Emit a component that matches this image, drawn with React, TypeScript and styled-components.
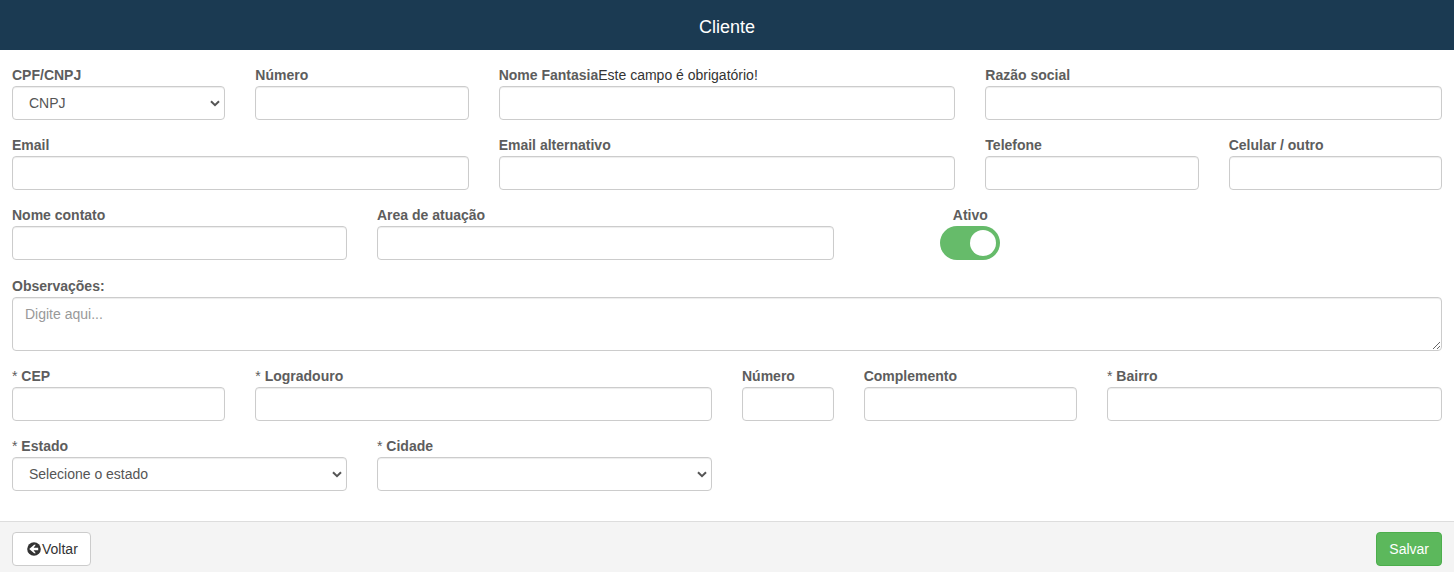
import React from "react";
import styled, { createGlobalStyle, css } from "styled-components";

const GlobalStyle = createGlobalStyle`
  *, *::before, *::after { box-sizing: border-box; }
  body {
    margin: 0;
    background: #fff;
    color: #333;
    font: 14px/20px "Liberation Sans", Arial, Helvetica, sans-serif;
  }
  input, select, textarea, button { font: inherit; margin: 0; }
`;

const Page = styled.div`
  display: flex;
  flex-direction: column;
  height: 572px;
  overflow: hidden;
`;

const Header = styled.header`
  flex: none;
  height: 50px;
  padding-top: 4px;
  display: flex;
  align-items: center;
  justify-content: center;
  background: #1b3a52;
  color: #fff;
  font-size: 18px;
`;

const Form = styled.main`
  flex: 1;
  padding: 16px 12px 0;
`;

const Row = styled.div<{ $space?: number }>`
  display: grid;
  grid-template-columns: repeat(12, minmax(0, 1fr));
  column-gap: 30px;
  margin-bottom: ${(p) => p.$space ?? 16}px;
`;

const Cell = styled.div<{ $span: number }>`
  grid-column: span ${(p) => p.$span};
  display: flex;
  flex-direction: column;
`;

const LabelLine = styled.div`
  height: 20px;
  line-height: 19px;
  white-space: nowrap;
`;

const Label = styled.label`
  font-weight: bold;
  color: #5d5d5d;
`;

const Star = styled.span`
  font-weight: normal;
`;

const control = css`
  display: block;
  width: 100%;
  height: 34px;
  padding: 6px 12px;
  color: #555;
  background: #fff;
  border: 1px solid #ccc;
  border-radius: 4px;
  box-shadow: inset 0 1px 1px rgba(0, 0, 0, 0.075);
  outline: none;
`;

const Input = styled.input`
  ${control}
`;

const SelectBox = styled.div`
  position: relative;
`;

const Select = styled.select`
  ${control}
  appearance: none;
  padding-left: 16px;
`;

const Chevron = styled.svg`
  position: absolute;
  top: 14px;
  right: 5px;
  width: 10px;
  height: 7px;
  pointer-events: none;
`;

const TextArea = styled.textarea`
  ${control}
  height: 54px;
  resize: vertical;
  &::placeholder { color: #999; }
`;

const ToggleCell = styled(Cell)`
  align-items: center;
`;

const Toggle = styled.button`
  width: 60px;
  height: 34px;
  padding: 4px;
  border: 0;
  border-radius: 34px;
  background: #66bb6a;
  display: flex;
  align-items: center;
  justify-content: flex-end;
`;

const Knob = styled.span`
  width: 26px;
  height: 26px;
  border-radius: 50%;
  background: #fff;
`;

const Footer = styled.footer`
  flex: none;
  height: 51px;
  padding: 10px 12px 0;
  display: flex;
  justify-content: space-between;
  align-items: flex-start;
  background: #f4f4f4;
  border-top: 1px solid #ddd;
`;

const Button = styled.button<{ $primary?: boolean }>`
  height: 34px;
  padding: 6px 12px;
  display: inline-flex;
  align-items: center;
  border-radius: 4px;
  border: 1px solid ${(p) => (p.$primary ? "#4cae4c" : "#ccc")};
  background: ${(p) => (p.$primary ? "#5cb85c" : "#fff")};
  color: ${(p) => (p.$primary ? "#fff" : "#333")};
`;

const BackIcon = styled.svg`
  width: 14px;
  height: 14px;
  margin: 0 1px 0 2px;
`;

function Caption({ text, required, error }: { text: string; required?: boolean; error?: string }) {
  return (
    <LabelLine>
      <Label>{required && <Star>* </Star>}{text}</Label>
      {error}
    </LabelLine>
  );
}

interface FieldProps {
  span: number;
  label: string;
  required?: boolean;
  error?: string;
  options?: string[];
}

function Field({ span, label, required, error, options }: FieldProps) {
  return (
    <Cell $span={span}>
      <Caption text={label} required={required} error={error} />
      {options ? (
        <SelectBox>
          <Select aria-label={label}>
            {options.map((o) => <option key={o}>{o}</option>)}
          </Select>
          <Chevron viewBox="0 0 10 7" aria-hidden="true">
            <path d="M1 1.2 5 5.2 9 1.2" fill="none" stroke="#555" strokeWidth="2" />
          </Chevron>
        </SelectBox>
      ) : (
        <Input aria-label={label} />
      )}
    </Cell>
  );
}

export default function App() {
  return (
    <Page>
      <GlobalStyle />
      <Header>Cliente</Header>
      <Form>
        <Row>
          <Field span={2} label="CPF/CNPJ" options={["CNPJ"]} />
          <Field span={2} label="Número" />
          <Field span={4} label="Nome Fantasia" error="Este campo é obrigatório!" />
          <Field span={4} label="Razão social" />
        </Row>
        <Row>
          <Field span={4} label="Email" />
          <Field span={4} label="Email alternativo" />
          <Field span={2} label="Telefone" />
          <Field span={2} label="Celular / outro" />
        </Row>
        <Row $space={17}>
          <Field span={3} label="Nome contato" />
          <Field span={4} label="Area de atuação" />
          <ToggleCell $span={2}>
            <Caption text="Ativo" />
            <Toggle role="switch" aria-checked="true" aria-label="Ativo"><Knob /></Toggle>
          </ToggleCell>
        </Row>
        <Row>
          <Cell $span={12}>
            <Caption text="Observações:" />
            <TextArea placeholder="Digite aqui..." />
          </Cell>
        </Row>
        <Row>
          <Field span={2} label="CEP" required />
          <Field span={4} label="Logradouro" required />
          <Field span={1} label="Número" />
          <Field span={2} label="Complemento" />
          <Field span={3} label="Bairro" required />
        </Row>
        <Row>
          <Field span={3} label="Estado" required options={["Selecione o estado"]} />
          <Field span={3} label="Cidade" required options={[""]} />
        </Row>
      </Form>
      <Footer>
        <Button>
          <BackIcon viewBox="0 0 14 14" aria-hidden="true">
            <circle cx="7" cy="7" r="6.8" fill="#333" />
            <path d="M2.2 7 7.2 2.8h1.6L6.6 5.8h4.6v2.4H6.6l2.2 3H7.2z" fill="#fff" />
          </BackIcon>
          Voltar
        </Button>
        <Button $primary>Salvar</Button>
      </Footer>
    </Page>
  );
}
